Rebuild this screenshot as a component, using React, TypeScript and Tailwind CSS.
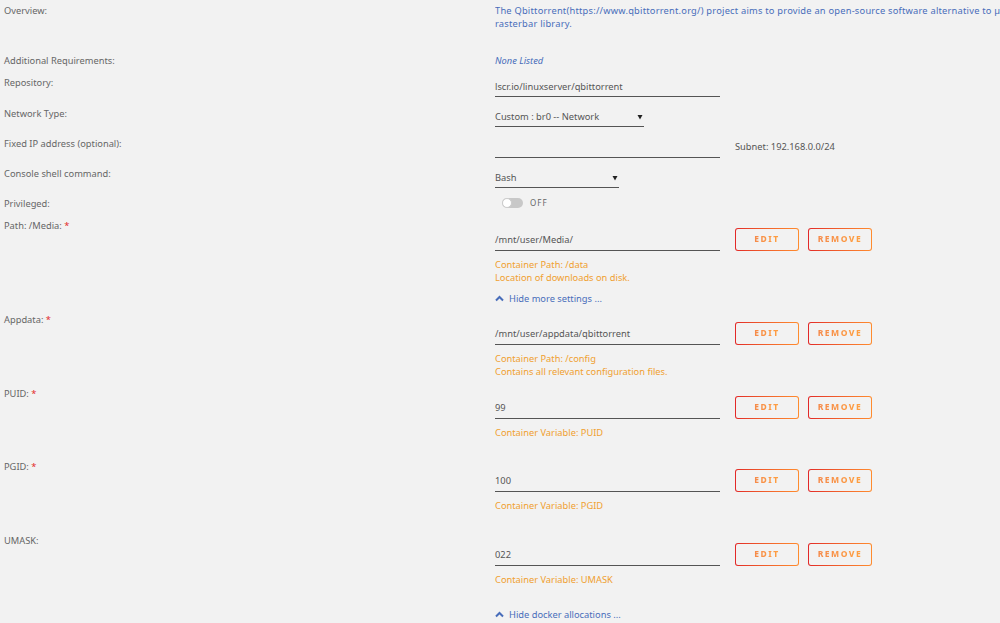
import React from "react";

const font = { fontFamily: '"Noto Sans", "Open Sans", Arial, sans-serif' };

function Label({ text, req }: { text: string; req?: boolean }) {
  return (
    <div className="w-[491px] shrink-0 leading-[13px] text-[#666]">
      {text}
      {req && <span className="text-[#e22828]"> *</span>}
    </div>
  );
}

function Btn({ text }: { text: string }) {
  return (
    <div className="h-[23px] w-[64px] rounded-[3px] bg-gradient-to-r from-[#e22828] to-[#ff8c2f] p-[1px]">
      <div className="flex h-full w-full items-center justify-center rounded-[2px] bg-[#f2f2f2]">
        <span className="bg-gradient-to-r from-[#f58a4a] to-[#ffa040] bg-clip-text text-[8.5px] font-extrabold tracking-[1.5px] text-transparent">
          {text}
        </span>
      </div>
    </div>
  );
}

function Chevron() {
  return (
    <svg width="9" height="7" viewBox="0 0 9 7" className="mr-[5px]">
      <polyline points="1,5.5 4.5,2 8,5.5" fill="none" stroke="#486dba" strokeWidth="2" />
    </svg>
  );
}

function Arrow() {
  return (
    <svg width="6" height="6" viewBox="0 0 6 6">
      <polygon points="0.5,1 5.5,1 3,5.5" fill="#222" />
    </svg>
  );
}

function PathRow({
  label,
  req,
  value,
  lines,
  height,
  link,
  linkMt = "mt-[8px]",
}: {
  label: string;
  req?: boolean;
  value: string;
  lines: string[];
  height: string;
  link?: string;
  linkMt?: string;
}) {
  return (
    <div className={`flex ${height}`}>
      <Label text={label} req={req} />
      <div className="flex flex-col pt-[9px]">
        <div className="flex items-center">
          <div className="flex h-[23px] w-[225px] items-center border-b border-[#555] pt-[1px] text-[#555]">
            {value}
          </div>
          <div className="ml-[15px] flex gap-[9px]">
            <Btn text="EDIT" />
            <Btn text="REMOVE" />
          </div>
        </div>
        <div className="mt-[7px] leading-[13px] text-[#f0a030]">
          {lines.map((l) => (
            <div key={l}>{l}</div>
          ))}
        </div>
        {link && (
          <div className={`${linkMt} flex items-center leading-[13px] text-[#486dba]`}>
            <Chevron />
            {link}
          </div>
        )}
      </div>
    </div>
  );
}

export default function App() {
  return (
    <div
      className="h-[623px] w-[1000px] overflow-hidden bg-[#f2f2f2] pl-[4px] pt-[4px] text-[9.3px]"
      style={font}
    >
      <div className="flex h-[50px]">
        <Label text="Overview:" />
        <div className="w-[505px] overflow-hidden whitespace-nowrap leading-[13px] tracking-[0.22px] text-[#486dba]">
          <div>
            The Qbittorrent(https://www.qbittorrent.org/) project aims to provide an open-source software alternative to µTorrent. qBittorrent is based on the Qt toolkit and libtorrent-
          </div>
          <div>rasterbar library.</div>
        </div>
      </div>

      <div className="flex h-[22px]">
        <Label text="Additional Requirements:" />
        <div className="leading-[13px] italic text-[#486dba]">None Listed</div>
      </div>

      <div className="flex h-[31px]">
        <Label text="Repository:" />
        <div className="pt-[1px]">
          <div className="flex h-[20px] w-[225px] items-center border-b border-[#555] text-[#555]">
            lscr.io/linuxserver/qbittorrent
          </div>
        </div>
      </div>

      <div className="flex h-[30px]">
        <Label text="Network Type:" />
        <div>
          <div className="flex h-[20px] w-[149px] items-center justify-between border-b border-[#555] pr-[1px] text-[#555]">
            <span>Custom : br0 -- Network</span>
            <Arrow />
          </div>
        </div>
      </div>

      <div className="flex h-[30px]">
        <Label text="Fixed IP address (optional):" />
        <div className="flex items-start pt-[1px]">
          <div className="h-[20px] w-[225px] border-b border-[#555]" />
          <div className="ml-[15px] mt-[2px] leading-[13px] text-[#555]">Subnet: 192.168.0.0/24</div>
        </div>
      </div>

      <div className="flex h-[30px]">
        <Label text="Console shell command:" />
        <div className="pt-[1px]">
          <div className="flex h-[20px] w-[124px] items-center justify-between border-b border-[#555] pr-[1px] text-[#555]">
            <span>Bash</span>
            <Arrow />
          </div>
        </div>
      </div>

      <div className="flex h-[22px] items-start">
        <Label text="Privileged:" />
        <div className="flex h-[11px] items-center pl-[7px]">
          <div className="flex h-[10px] w-[21px] items-center rounded-full bg-[#c8c8c8]">
            <div className="h-[10px] w-[10px] rounded-full border border-[#ccc] bg-white" />
          </div>
          <span className="ml-[7px] text-[8px] tracking-[1px] text-[#666]">OFF</span>
        </div>
      </div>

      <PathRow
        label="Path: /Media:"
        req
        value="/mnt/user/Media/"
        lines={["Container Path: /data", "Location of downloads on disk."]}
        link="Hide more settings ..."
        height="h-[94px]"
      />
      <PathRow
        label="Appdata:"
        req
        value="/mnt/user/appdata/qbittorrent"
        lines={["Container Path: /config", "Contains all relevant configuration files."]}
        height="h-[74px]"
      />
      <PathRow
        label="PUID:"
        req
        value="99"
        lines={["Container Variable: PUID"]}
        height="h-[73px]"
      />
      <PathRow
        label="PGID:"
        req
        value="100"
        lines={["Container Variable: PGID"]}
        height="h-[74px]"
      />
      <PathRow
        label="UMASK:"
        value="022"
        lines={["Container Variable: UMASK"]}
        link="Hide docker allocations ..."
        linkMt="mt-[22px]"
        height="h-[100px]"
      />
    </div>
  );
}
